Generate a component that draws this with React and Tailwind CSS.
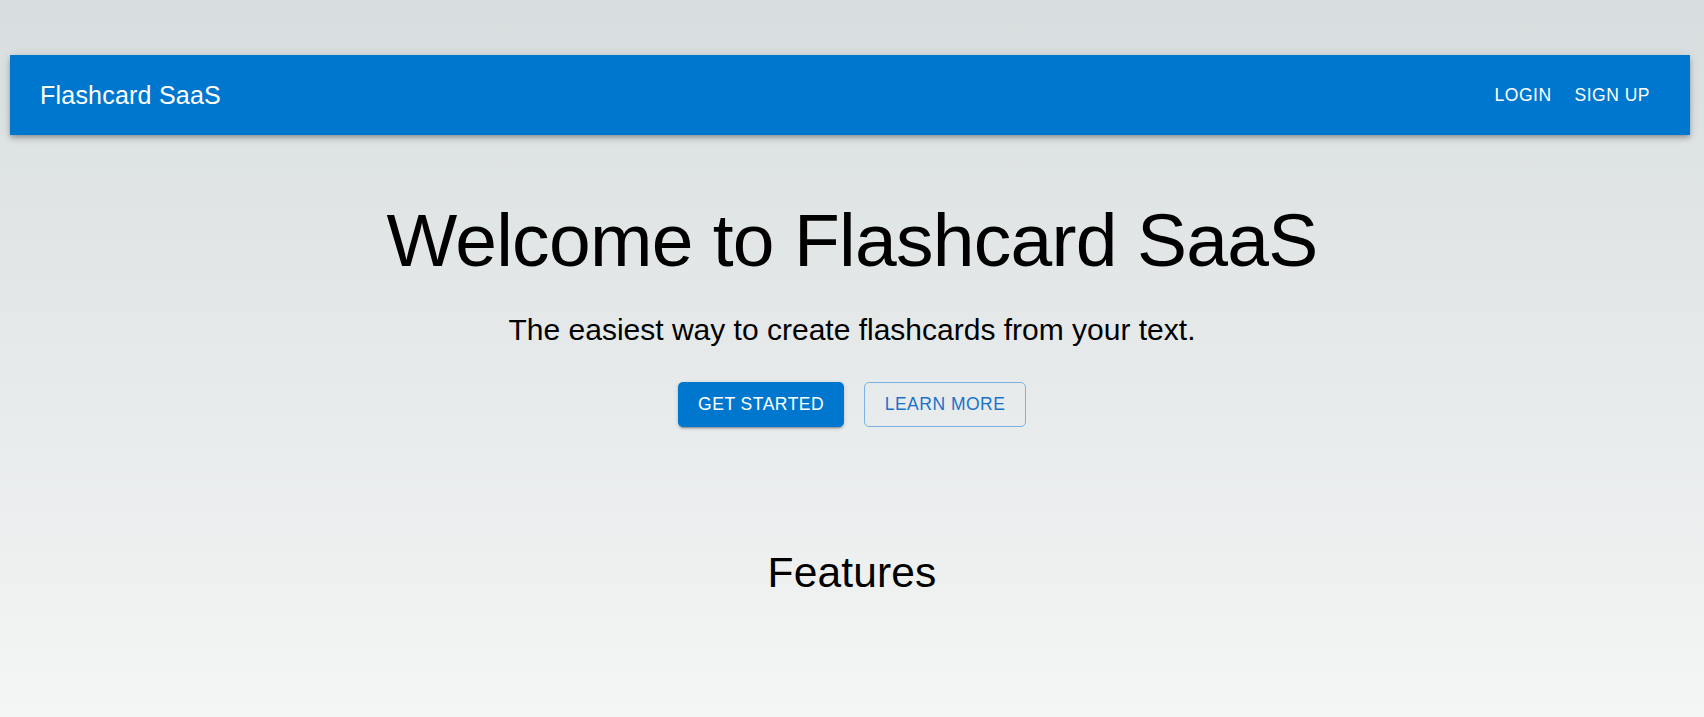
import React from 'react';

const font = { fontFamily: '"Liberation Sans", Arial, sans-serif' };

const NavBar = () => (
  <header className="mx-[10px] mt-[55px] w-[1680px] h-[80px] bg-[#0077cf] text-white flex items-center justify-between px-[30px] shadow-[0_2px_4px_-1px_rgba(0,0,0,0.2),0_4px_5px_0_rgba(0,0,0,0.14),0_1px_10px_0_rgba(0,0,0,0.12)]">
    <span className="text-[25px] leading-[1.6] tracking-[0.22px]">Flashcard SaaS</span>
    <nav className="flex items-center gap-[3px]">
      <button className="px-[10px] py-[7.5px] text-[17.5px] leading-[1.75] tracking-[0.5px] uppercase">Login</button>
      <button className="px-[10px] py-[7.5px] text-[17.5px] leading-[1.75] tracking-[0.5px] uppercase">Sign Up</button>
    </nav>
  </header>
);

export default function App() {
  return (
    <div
      className="min-h-[717px] w-full overflow-hidden bg-gradient-to-b from-[#d8dedf] to-[#f4f5f5] text-black"
      style={font}
    >
      <NavBar />

      <main className="flex flex-col items-center pt-[60px]">
        <h1 className="text-[75px] leading-[90px] tracking-[-0.72px] mb-[25px]">Welcome to Flashcard SaaS</h1>
        <p className="text-[30px] leading-[40px]">The easiest way to create flashcards from your text.</p>

        <div className="flex items-center gap-[20px] mt-[32px]">
          <button className="h-[45px] px-[20px] rounded-[5px] bg-[#0077cf] text-white text-[17.5px] tracking-[0.5px] uppercase shadow-[0_3px_1px_-2px_rgba(0,0,0,0.2),0_2px_2px_0_rgba(0,0,0,0.14),0_1px_5px_0_rgba(0,0,0,0.12)]">
            Get Started
          </button>
          <button className="h-[45px] px-[19.5px] rounded-[5px] border border-[#7ab3e3] text-[#1a73c8] text-[17.5px] tracking-[0.5px] uppercase">
            Learn More
          </button>
        </div>

        <h2 className="mt-[120px] text-[42.5px] leading-[52.5px] tracking-[0.15px]">Features</h2>
      </main>
    </div>
  );
}
